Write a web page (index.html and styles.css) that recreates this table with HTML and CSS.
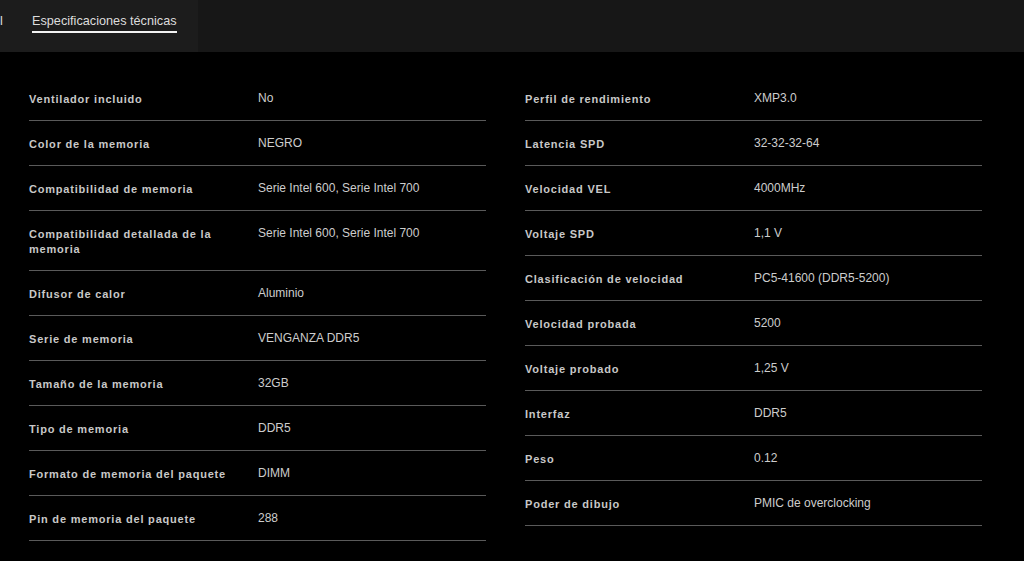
FILE: index.html
```html
<!DOCTYPE html>
<html lang="es">
<head>
<meta charset="utf-8">
<link rel="stylesheet" href="styles.css">
</head>
<body>
<header class="tabbar">
  <div class="tabs">
    <span class="tab tab-prev">l</span>
    <span class="tab tab-active">Especificaciones técnicas</span>
  </div>
</header>
<main class="specs">
  <dl class="col">
    <div class="row"><dt>Ventilador incluido</dt><dd>No</dd></div>
    <div class="row"><dt>Color de la memoria</dt><dd>NEGRO</dd></div>
    <div class="row"><dt>Compatibilidad de memoria</dt><dd>Serie Intel 600, Serie Intel 700</dd></div>
    <div class="row"><dt>Compatibilidad detallada de la memoria</dt><dd>Serie Intel 600, Serie Intel 700</dd></div>
    <div class="row"><dt>Difusor de calor</dt><dd>Aluminio</dd></div>
    <div class="row"><dt>Serie de memoria</dt><dd>VENGANZA DDR5</dd></div>
    <div class="row"><dt>Tamaño de la memoria</dt><dd>32GB</dd></div>
    <div class="row"><dt>Tipo de memoria</dt><dd>DDR5</dd></div>
    <div class="row"><dt>Formato de memoria del paquete</dt><dd>DIMM</dd></div>
    <div class="row"><dt>Pin de memoria del paquete</dt><dd>288</dd></div>
  </dl>
  <dl class="col">
    <div class="row"><dt>Perfil de rendimiento</dt><dd>XMP3.0</dd></div>
    <div class="row"><dt>Latencia SPD</dt><dd>32-32-32-64</dd></div>
    <div class="row"><dt>Velocidad VEL</dt><dd>4000MHz</dd></div>
    <div class="row"><dt>Voltaje SPD</dt><dd>1,1 V</dd></div>
    <div class="row"><dt>Clasificación de velocidad</dt><dd>PC5-41600 (DDR5-5200)</dd></div>
    <div class="row"><dt>Velocidad probada</dt><dd>5200</dd></div>
    <div class="row"><dt>Voltaje probado</dt><dd>1,25 V</dd></div>
    <div class="row"><dt>Interfaz</dt><dd>DDR5</dd></div>
    <div class="row"><dt>Peso</dt><dd>0.12</dd></div>
    <div class="row"><dt>Poder de dibujo</dt><dd>PMIC de overclocking</dd></div>
  </dl>
</main>
</body>
</html>
```
FILE: styles.css
```css
* { box-sizing: border-box; }
html, body {
  margin: 0;
  padding: 0;
  background: #000;
  font-family: "Liberation Sans", Arial, sans-serif;
  color: #cfcfcf;
}
.tabbar {
  height: 52px;
  background: #171717;
  display: flex;
}
.tabs {
  width: 198px;
  background: #1c1c1c;
  display: flex;
  align-items: flex-start;
}
.tab {
  font-size: 12.7px;
  color: #dcdcdc;
  padding-top: 13px;
  line-height: 17px;
}
.tab-prev {
  width: 32px;
}
.tab-active {
  border-bottom: 2px solid #f2f2f2;
  padding-bottom: 1px;
}
.specs {
  display: grid;
  grid-template-columns: 457px 457px;
  column-gap: 39px;
  padding: 24px 42px 0 29px;
}
.col {
  margin: 0;
}
.row {
  display: flex;
  align-items: flex-start;
  padding: 16px 0 13px;
  border-bottom: 1px solid #5a5a5a;
}
.row dt {
  width: 229px;
  flex: none;
  padding-right: 16px;
  font-size: 11px;
  font-weight: bold;
  letter-spacing: 0.8px;
  line-height: 15px;
  color: #c8c8c8;
}
.row dd {
  margin: 0;
  font-size: 12px;
  line-height: 15px;
  margin-top: -1px;
  color: #cdcdcd;
}
```
